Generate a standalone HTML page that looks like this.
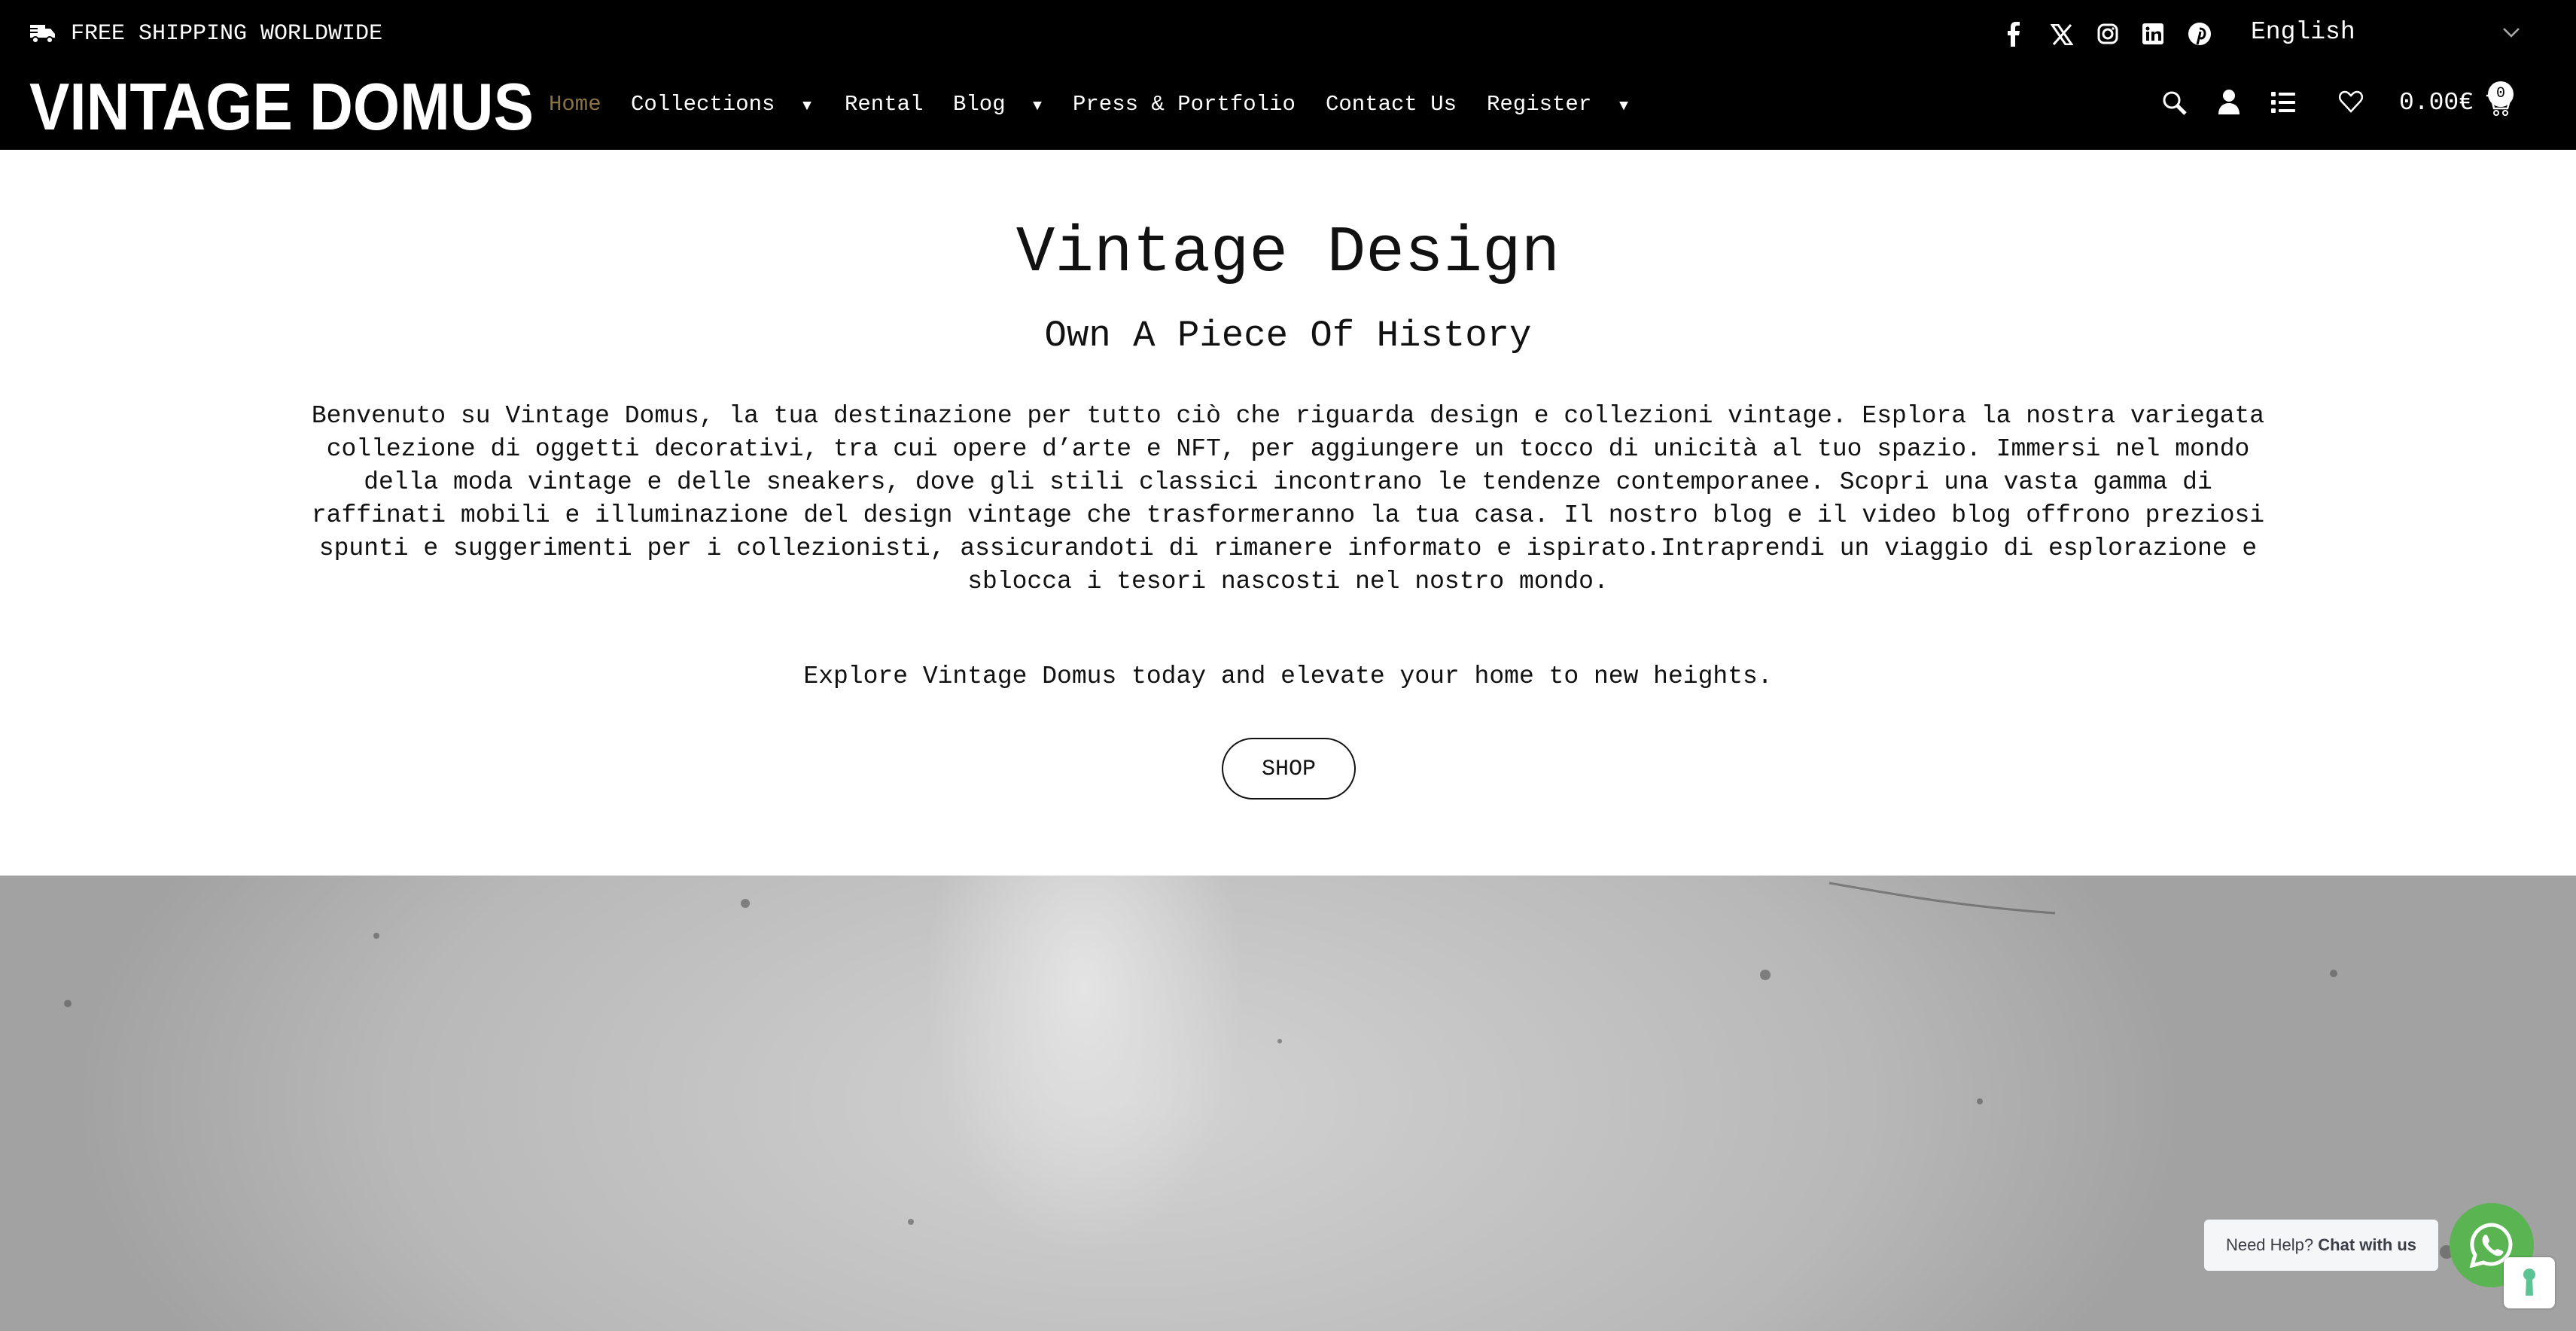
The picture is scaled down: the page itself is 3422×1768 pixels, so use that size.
<!DOCTYPE html>
<html><head><meta charset="utf-8"><style>
*{margin:0;padding:0;box-sizing:border-box}
body{width:3422px;height:1768px;overflow:hidden;background:#fff;font-family:"Liberation Mono","DejaVu Sans Mono",monospace;position:relative}
.hdr{position:absolute;left:0;top:0;width:3422px;height:199px;background:#000;color:#fff}
.a{position:absolute;white-space:nowrap}
.nav{font-size:29px;top:122px}
.c{text-align:center;position:absolute;left:0;width:3422px;color:#111}
.hero{position:absolute;left:0;top:1163px;width:3422px;height:605px;
background:radial-gradient(ellipse 300px 500px at 1440px 150px,#e4e4e4,rgba(220,220,220,0) 70%),
radial-gradient(ellipse 1400px 700px at 1500px 300px,#d3d3d3,#b8b8b8 70%,#a2a2a2);}
</style></head><body>
<div class="hdr">
<svg class="a" style="left:40px;top:30px" width="34" height="30" viewBox="0 0 34 30"><rect x="0" y="3" width="20" height="17" fill="#fff"/><path d="M20 8h7l6 7v5H20z" fill="#fff"/><circle cx="7" cy="23" r="4" fill="#fff" stroke="#000" stroke-width="2"/><circle cx="26" cy="23" r="4" fill="#fff" stroke="#000" stroke-width="2"/><rect x="0" y="7" width="10" height="2" fill="#000"/><rect x="0" y="12" width="10" height="2" fill="#000"/></svg>
<div class="a" style="left:94px;top:28px;font-size:30px">FREE SHIPPING WORLDWIDE</div>
<svg class="a" style="left:2664px;top:28px" width="20" height="34" viewBox="0 0 20 34"><path d="M13 34V19h5l1-6h-6V9c0-2 1-3 3-3h3V1h-5c-5 0-7 3-7 7v5H3v6h4v15z" fill="#fff"/></svg>
<svg class="a" style="left:2724px;top:32px" width="30" height="28" viewBox="0 0 30 28"><path d="M2 1h8l18 26h-8z" fill="none" stroke="#fff" stroke-width="3"/><path d="M27 1L4 27" stroke="#fff" stroke-width="3"/></svg>
<svg class="a" style="left:2786px;top:31px" width="28" height="28" viewBox="0 0 28 28"><rect x="2" y="2" width="24" height="24" rx="7" fill="none" stroke="#fff" stroke-width="3"/><circle cx="14" cy="14" r="6" fill="none" stroke="#fff" stroke-width="3"/><circle cx="21" cy="7" r="1.6" fill="#fff"/></svg>
<svg class="a" style="left:2846px;top:31px" width="28" height="28" viewBox="0 0 28 28"><rect width="28" height="28" rx="3" fill="#fff"/><rect x="5" y="11" width="4" height="12" fill="#000"/><circle cx="7" cy="7" r="2.5" fill="#000"/><path d="M12 11h4v2c1-2 3-2.5 5-2.5 3 0 4 2 4 5V23h-4v-7c0-2-1-2.5-2-2.5s-3 .5-3 2.5v7h-4z" fill="#000"/></svg>
<svg class="a" style="left:2906px;top:29px" width="32" height="32" viewBox="0 0 32 32"><circle cx="16" cy="16" r="15" fill="#fff"/><path d="M13 30l3-12M16 9c5 0 7 3 7 6 0 4-2 7-5 7-2 0-3-2-2-4l1-5" fill="none" stroke="#000" stroke-width="3"/></svg>
<div class="a" style="left:2990px;top:24px;font-size:33px">English</div>
<svg class="a" style="left:3324px;top:36px" width="24" height="14" viewBox="0 0 24 14"><path d="M2 2l10 10 10-10" fill="none" stroke="#aaa" stroke-width="2.5"/></svg>

<svg class="a" style="left:39px;top:104px" width="672" height="72" viewBox="0 0 672 72"><text x="0" y="68" font-family="Liberation Sans,sans-serif" font-size="88" font-weight="bold" fill="#fff" textLength="670" lengthAdjust="spacingAndGlyphs">VINTAGE DOMUS</text></svg>
<div class="a nav" style="left:729px;color:#8a7340">Home</div>
<div class="a nav" style="left:838px">Collections</div>
<div class="a nav" style="left:1066px;font-size:20px;top:130px">▼</div>
<div class="a nav" style="left:1122px">Rental</div>
<div class="a nav" style="left:1266px">Blog</div>
<div class="a nav" style="left:1372px;font-size:20px;top:130px">▼</div>
<div class="a nav" style="left:1425px">Press &amp; Portfolio</div>
<div class="a nav" style="left:1761px">Contact Us</div>
<div class="a nav" style="left:1975px">Register</div>
<div class="a nav" style="left:2151px;font-size:20px;top:130px">▼</div>
<svg class="a" style="left:2872px;top:120px" width="34" height="34" viewBox="0 0 34 34"><circle cx="13" cy="13" r="10" fill="none" stroke="#fff" stroke-width="3"/><path d="M20 20l11 11" stroke="#fff" stroke-width="5"/></svg>
<svg class="a" style="left:2946px;top:118px" width="30" height="34" viewBox="0 0 30 34"><circle cx="15" cy="9" r="8" fill="#fff"/><path d="M1 34c0-10 6-15 14-15s14 5 14 15z" fill="#fff"/></svg>
<svg class="a" style="left:3017px;top:122px" width="32" height="28" viewBox="0 0 32 28"><g fill="#fff"><rect y="0" width="6" height="6" rx="1"/><rect y="11" width="6" height="6" rx="1"/><rect y="22" width="6" height="6" rx="1"/><rect x="10" y="1" width="22" height="4" rx="1"/><rect x="10" y="12" width="22" height="4" rx="1"/><rect x="10" y="23" width="22" height="4" rx="1"/></g></svg>
<svg class="a" style="left:3107px;top:120px" width="32" height="30" viewBox="0 0 32 30"><path d="M16 28L3 14C-1 9 2 2 8 2c4 0 6 3 8 5 2-2 4-5 8-5 6 0 9 7 5 12z" fill="none" stroke="#fff" stroke-width="2.5"/></svg>
<div class="a" style="left:3187px;top:118px;font-size:33px">0.00€</div>
<svg class="a" style="left:3302px;top:124px" width="34" height="30" viewBox="0 0 34 30"><path d="M1 3h6l4 17h18l3-11H9" fill="none" stroke="#fff" stroke-width="2.5"/><circle cx="14" cy="26" r="3" fill="none" stroke="#fff" stroke-width="2"/><circle cx="26" cy="26" r="3" fill="none" stroke="#fff" stroke-width="2"/></svg>
<div class="a" style="left:3305px;top:108px;width:34px;height:34px;border-radius:50%;background:#fff;color:#000;font-size:20px;text-align:center;line-height:34px">0</div>
</div>

<div class="c" style="top:286px;font-size:86px;line-height:100px">Vintage Design</div>
<div class="c" style="top:416px;font-size:49px;line-height:60px">Own A Piece Of History</div>
<div class="c" style="top:531px;font-size:33px;line-height:44px">Benvenuto su Vintage Domus, la tua destinazione per tutto ciò che riguarda design e collezioni vintage. Esplora la nostra variegata<br>collezione di oggetti decorativi, tra cui opere d’arte e NFT, per aggiungere un tocco di unicità al tuo spazio. Immersi nel mondo<br>della moda vintage e delle sneakers, dove gli stili classici incontrano le tendenze contemporanee. Scopri una vasta gamma di<br>raffinati mobili e illuminazione del design vintage che trasformeranno la tua casa. Il nostro blog e il video blog offrono preziosi<br>spunti e suggerimenti per i collezionisti, assicurandoti di rimanere informato e ispirato.Intraprendi un viaggio di esplorazione e<br>sblocca i tesori nascosti nel nostro mondo.</div>
<div class="c" style="top:877px;font-size:33px;line-height:44px">Explore Vintage Domus today and elevate your home to new heights.</div>
<div class="a" style="left:1623px;top:980px;width:178px;height:82px;border:2px solid #111;border-radius:41px;text-align:center;line-height:80px;font-size:30px;color:#111">SHOP</div>

<div class="hero">
<svg width="3422" height="605" style="position:absolute;left:0;top:0"><g fill="#555" opacity=".6"><circle cx="990" cy="37" r="6"/><circle cx="90" cy="170" r="5"/><circle cx="2345" cy="132" r="7"/><circle cx="3250" cy="500" r="9"/><circle cx="1700" cy="220" r="3"/><circle cx="2630" cy="300" r="4"/><circle cx="500" cy="80" r="4"/><circle cx="3100" cy="130" r="5"/><circle cx="1210" cy="460" r="4"/></g><path d="M2430 10c60 10 160 30 300 40" stroke="#555" stroke-width="3" fill="none" opacity=".6"/></svg>
</div>

<div class="a" style="left:2928px;top:1620px;width:311px;height:68px;background:#f5f6f7;border-radius:6px;font-family:'Liberation Sans',sans-serif;font-size:22px;line-height:68px;text-align:center;color:#3a3f47">Need Help? <b>Chat with us</b></div>
<div class="a" style="left:3254px;top:1598px;width:112px;height:112px;border-radius:50%;background:#5ab452"></div>
<svg class="a" style="left:3280px;top:1624px" width="60" height="60" viewBox="0 0 60 60"><path d="M30 3a26 26 0 0 0-22 40L4 57l15-4A26 26 0 1 0 30 3z" fill="none" stroke="#fff" stroke-width="5"/><path d="M20 17c2-2 4-1 5 2l2 5c0 2-2 3-2 4 2 4 5 7 9 9 1 0 2-2 4-2l5 2c3 1 3 3 1 5-3 3-7 3-12 0-6-4-10-8-13-13-2-5-2-9 1-12z" fill="#fff"/></svg>
<div class="a" style="left:3326px;top:1670px;width:68px;height:68px;background:#fff;border-radius:8px;box-shadow:0 0 3px rgba(0,0,0,.3)"></div>
<svg class="a" style="left:3350px;top:1685px" width="20" height="38" viewBox="0 0 20 38"><circle cx="10" cy="8" r="8" fill="#5cc494"/><path d="M6 12h8l1 24H5z" fill="#5cc494"/></svg>
</body></html>
